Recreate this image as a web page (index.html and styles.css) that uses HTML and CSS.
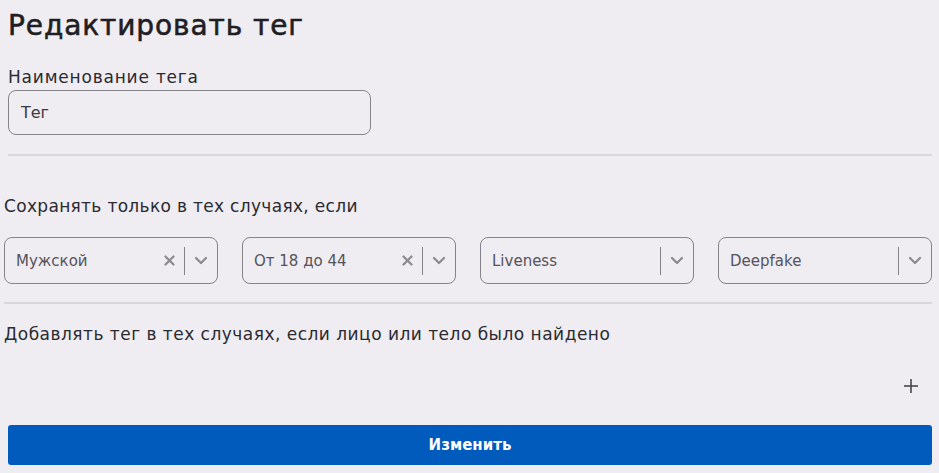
FILE: index.html
```html
<!DOCTYPE html>
<html lang="ru">
<head>
<meta charset="utf-8">
<title>Редактировать тег</title>
<link rel="stylesheet" href="styles.css">
</head>
<body>
<main class="page">
  <div class="tag-field">
    <h1 class="title">Редактировать тег</h1>
    <label class="label" for="tag-name">Наименование тега</label>
    <div class="input" id="tag-name">Тег</div>
    <hr class="divider">
  </div>

  <section class="conditions">
    <p class="section-title">Сохранять только в тех случаях, если</p>
    <div class="selects">
      <div class="select">
        <span class="select-value">Мужской</span>
        <span class="select-clear"><svg width="11" height="11" viewBox="0 0 11 11"><path d="M1.5 1.5l8 8M9.5 1.5l-8 8" stroke="#8a898e" stroke-width="2.2" stroke-linecap="round"/></svg></span>
        <span class="select-sep"></span>
        <span class="select-arrow"><svg width="14" height="9" viewBox="0 0 14 9"><path d="M2 2l5 5 5-5" fill="none" stroke="#8a898e" stroke-width="2.2" stroke-linecap="round" stroke-linejoin="round"/></svg></span>
      </div>
      <div class="select">
        <span class="select-value">От 18 до 44</span>
        <span class="select-clear"><svg width="11" height="11" viewBox="0 0 11 11"><path d="M1.5 1.5l8 8M9.5 1.5l-8 8" stroke="#8a898e" stroke-width="2.2" stroke-linecap="round"/></svg></span>
        <span class="select-sep"></span>
        <span class="select-arrow"><svg width="14" height="9" viewBox="0 0 14 9"><path d="M2 2l5 5 5-5" fill="none" stroke="#8a898e" stroke-width="2.2" stroke-linecap="round" stroke-linejoin="round"/></svg></span>
      </div>
      <div class="select">
        <span class="select-value">Liveness</span>
        <span class="select-sep"></span>
        <span class="select-arrow"><svg width="14" height="9" viewBox="0 0 14 9"><path d="M2 2l5 5 5-5" fill="none" stroke="#8a898e" stroke-width="2.2" stroke-linecap="round" stroke-linejoin="round"/></svg></span>
      </div>
      <div class="select">
        <span class="select-value">Deepfake</span>
        <span class="select-sep"></span>
        <span class="select-arrow"><svg width="14" height="9" viewBox="0 0 14 9"><path d="M2 2l5 5 5-5" fill="none" stroke="#8a898e" stroke-width="2.2" stroke-linecap="round" stroke-linejoin="round"/></svg></span>
      </div>
    </div>
    <hr class="divider divider-mid">
    <p class="section-title section-title-2">Добавлять тег в тех случаях, если лицо или тело было найдено</p>
    <div class="add-row">
      <span class="add"><svg width="14" height="14" viewBox="0 0 14 14"><path d="M7 0v14M0 7h14" stroke="#3f3e44" stroke-width="1.5"/></svg></span>
    </div>
  </section>

  <div class="actions">
    <button class="submit" type="button">Изменить</button>
  </div>
</main>
</body>
</html>
```

FILE: styles.css
```css
* { box-sizing: border-box; }

html, body {
  margin: 0;
  padding: 0;
  background: #efedf2;
}

body {
  font-family: "DejaVu Sans", "Noto Sans", sans-serif;
  color: #2b2a30;
}

.page {
  padding: 0 7px 0 4px;
}

.tag-field {
  padding-left: 4px;
}

.title {
  margin: 9px 0 0;
  font-size: 28px;
  line-height: 34px;
  font-weight: 400;
  letter-spacing: 0.9px;
  -webkit-text-stroke: 0.6px #1f1e24;
  color: #1f1e24;
}

.label {
  display: block;
  margin-top: 24px;
  font-size: 17px;
  line-height: 20px;
  letter-spacing: 0.8px;
  color: #2b2a30;
}

.input {
  margin-top: 3px;
  width: 363px;
  height: 45px;
  border: 1px solid #85848a;
  border-radius: 8px;
  padding: 0 12px;
  font-size: 16px;
  line-height: 43px;
  color: #3a393f;
}

.divider {
  margin: 19px 0 0;
  border: 0;
  height: 2px;
  background: #d9d7dd;
}

.section-title {
  margin: 40px 0 0;
  font-size: 17px;
  line-height: 20px;
  letter-spacing: 0.32px;
  color: #2b2a30;
}

.selects {
  margin-top: 21px;
  display: grid;
  grid-template-columns: repeat(4, 1fr);
  gap: 24px;
}

.select {
  height: 47px;
  border: 1px solid #85848a;
  border-radius: 8px;
  display: flex;
  align-items: center;
  padding-left: 11px;
}

.select-value {
  flex: 1;
  font-size: 15px;
  color: #55545a;
  white-space: nowrap;
}

.select-clear {
  display: flex;
  width: 11px;
  margin-right: 9px;
}

.select-sep {
  width: 1px;
  height: 28px;
  background: #85848a;
}

.select-arrow {
  display: flex;
  justify-content: center;
  width: 32px;
}

.divider-mid {
  margin-top: 18px;
}

.section-title-2 {
  margin-top: 20px;
  letter-spacing: 0.48px;
}

.add-row {
  display: flex;
  justify-content: flex-end;
  margin-top: 35px;
  padding-right: 14px;
}

.add {
  display: flex;
  width: 14px;
  height: 14px;
}

.actions {
  padding-left: 4px;
  margin-top: 32px;
}

.submit {
  display: block;
  width: 100%;
  height: 40px;
  border: 0;
  border-radius: 3px;
  background: #005bbd;
  color: #ffffff;
  font-family: "DejaVu Sans", sans-serif;
  font-size: 15px;
  font-weight: 700;
  cursor: pointer;
}
```
